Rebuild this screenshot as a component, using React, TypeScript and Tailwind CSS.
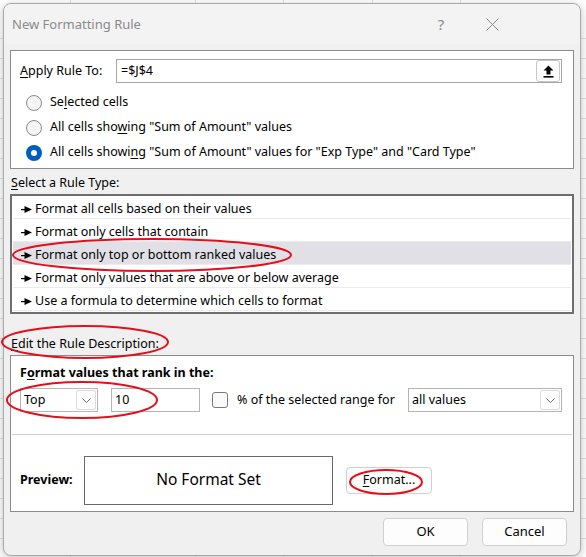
import type { ReactNode } from 'react';

const U = ({ children }: { children: ReactNode }) => (
  <span className="underline decoration-1 underline-offset-[2px]">{children}</span>
);

const Radio = ({ checked }: { checked?: boolean }) =>
  checked ? (
    <span className="w-[16px] h-[16px] rounded-full bg-[#005fb8] flex items-center justify-center shrink-0">
      <span className="w-[6px] h-[6px] rounded-full bg-white" />
    </span>
  ) : (
    <span className="w-[16px] h-[16px] rounded-full bg-[#f5f5f5] border border-[#8a8a8a] shrink-0" />
  );

const RowArrow = () => (
  <svg width="11" height="7" viewBox="0 0 11 7" className="shrink-0">
    <rect x="0" y="3" width="5" height="1.2" fill="#000" />
    <path d="M3.5 0 L11 3.5 L3.5 7 Z" fill="#000" />
  </svg>
);

const Chevron = () => (
  <svg width="9" height="5" viewBox="0 0 9 5">
    <path d="M0.5 0.5 L4.5 4.5 L8.5 0.5" fill="none" stroke="#666" strokeWidth="1" />
  </svg>
);

const Select = ({ value, width }: { value: string; width: string }) => (
  <div className={`${width} h-[24px] border border-[#b5b5b5] bg-white flex items-center pl-[3px] pr-[1px]`}>
    <span className="flex-1">{value}</span>
    <span className="w-[20px] h-[20px] border border-[#dadada] rounded-[2px] flex items-center justify-center">
      <Chevron />
    </span>
  </div>
);

const rules = [
  'Format all cells based on their values',
  'Format only cells that contain',
  'Format only top or bottom ranked values',
  'Format only values that are above or below average',
  'Use a formula to determine which cells to format',
];

export default function App() {
  return (
    <div className="relative w-[586px] h-[557px] overflow-hidden bg-white pl-[3px] pt-[3px] font-['Noto_Sans',sans-serif] text-[12.5px] text-black">
      {/* spreadsheet grid behind the dialog */}
      {[70, 195, 283, 372, 460].map((x) => (
        <div key={x} className="absolute top-0 w-px h-[557px] bg-[#e1e1e1]" style={{ left: x }} />
      ))}
      {[38, 58, 78, 98, 118, 138, 158, 178, 198, 218, 238, 258, 278, 298, 318, 338, 358, 378, 398, 418, 438, 458, 478, 498, 518, 538].map((y) => (
        <div key={y} className="absolute left-0 w-[586px] h-px bg-[#e1e1e1]" style={{ top: y }} />
      ))}

      <div className="relative w-[578px] h-[553px] bg-[#f0f0f0] border border-[#a9a9a9] rounded-[8px] shadow-[0_2px_10px_rgba(0,0,0,0.25)] flex flex-col">
        {/* title bar */}
        <div className="h-[40px] flex items-center pl-[8px] bg-[#f3f3f3] rounded-t-[8px] text-[#8a8a8a]">
          <span className="flex-1 text-[13px] pt-px">New Formatting Rule</span>
          <span className="w-[30px] text-center text-[15px]">?</span>
          <span className="w-[30px] ml-[21px] mr-[73px] flex justify-center">
            <svg width="13" height="13" viewBox="0 0 13 13">
              <path d="M0.5 0.5 L12.5 12.5 M12.5 0.5 L0.5 12.5" stroke="#8a8a8a" strokeWidth="1" />
            </svg>
          </span>
        </div>

        <div className="px-[6px] flex flex-col">
          {/* apply rule to */}
          <div className="mt-[6px] h-[119px] border border-[#8c8c8c] bg-white pl-[9px] pr-[11px] pt-[8px]">
            <div className="flex items-center h-[24px]">
              <span className="w-[96px]">
                <U>A</U>pply Rule To:
              </span>
              <div className="flex-1 h-[24px] border border-[#a5a5a5] flex items-center pl-[4px] pr-px">
                <span className="flex-1">=$J$4</span>
                <span className="w-[24px] h-[22px] border border-[#c8c8c8] rounded-[3px] bg-[#fdfdfd] flex items-center justify-center">
                  <svg width="11" height="13" viewBox="0 0 11 13">
                    <path d="M5.5 0.5 L10.5 5.5 L7.5 5.5 L7.5 9.5 L3.5 9.5 L3.5 5.5 L0.5 5.5 Z" fill="#000" />
                    <rect x="0.5" y="11" width="10" height="1.6" fill="#000" />
                  </svg>
                </span>
              </div>
            </div>
            <div className="mt-[7px] flex flex-col pl-[6px]">
              <div className="h-[25px] flex items-center gap-[8px]">
                <Radio />
                <span>
                  Se<U>l</U>ected cells
                </span>
              </div>
              <div className="h-[25px] flex items-center gap-[8px]">
                <Radio />
                <span>
                  All cells sho<U>w</U>ing "Sum of Amount" values
                </span>
              </div>
              <div className="h-[25px] flex items-center gap-[8px]">
                <Radio checked />
                <span>
                  All cells showi<U>n</U>g "Sum of Amount" values for "Exp Type" and "Card Type"
                </span>
              </div>
            </div>
          </div>

          {/* rule type */}
          <div className="h-[25px] pt-[3px] flex items-center pl-px">
            <span>
              <U>S</U>elect a Rule Type:
            </span>
          </div>
          <div className="h-[120px] border-2 border-[#6e6e6e] bg-white px-px">
            {rules.map((r, i) => (
              <div
                key={r}
                className={`h-[23px] border-b border-[#ebebeb] flex items-center pt-[5px] pl-[8px] gap-[2px] ${
                  i === 2 ? 'bg-[#e0e0e6]' : ''
                }`}
              >
                <RowArrow />
                <span className="ml-px">{r}</span>
              </div>
            ))}
          </div>

          {/* description */}
          <div className="h-[41px] flex items-end pb-[3px] pl-px">
            <span className="leading-[16px]">
              <U>E</U>dit the Rule Description:
            </span>
          </div>
          <div className="h-[157px] border border-[#8c8c8c] bg-white flex flex-col">
            <div className="h-[78px] pl-[9px] pr-[11px] pt-[9px]">
              <div className="font-bold leading-[16px]">
                F<U>o</U>rmat values that rank in the:
              </div>
              <div className="mt-[7px] flex items-center h-[24px]">
                <Select value="Top" width="w-[78px]" />
                <div className="ml-[13px] w-[89px] h-[24px] border border-[#b5b5b5] flex items-center pl-[3px]">10</div>
                <span className="ml-[12px] w-[16px] h-[16px] rounded-[3px] border border-[#7a7a7a] bg-[#fafafa]" />
                <span className="ml-[9px]">
                  % of the selected ran<U>g</U>e for
                </span>
                <div className="ml-auto">
                  <Select value="all values" width="w-[154px]" />
                </div>
              </div>
            </div>
            <div className="mx-px h-px bg-[#d0d0d0]" />
            <div className="flex-1 flex items-center pl-[9px] pt-[14px]">
              <span className="w-[64px] font-bold">Preview:</span>
              <div className="w-[249px] h-[49px] border border-[#6a6a6a] flex items-center justify-center text-[15.5px]">
                No Format Set
              </div>
              <button className="ml-[13px] w-[86px] h-[27px] border border-[#d0d0d0] rounded-[4px] bg-[#fdfdfd]">
                <U>F</U>ormat...
              </button>
            </div>
          </div>

          {/* buttons */}
          <div className="mt-[6px] flex justify-end gap-[14px] pr-[7px]">
            <button className="w-[85px] h-[28px] border border-[#d0d0d0] rounded-[4px] bg-[#fdfdfd] text-[13px]">OK</button>
            <button className="w-[85px] h-[28px] border border-[#d0d0d0] rounded-[4px] bg-[#fdfdfd] text-[13px]">Cancel</button>
          </div>
        </div>
      </div>

      {/* red annotation ellipses */}
      <svg className="absolute inset-0 pointer-events-none" width="586" height="557">
        <g fill="none" stroke="#e3101c" strokeWidth="2">
          <ellipse cx="152" cy="255" rx="139" ry="16" />
          <ellipse cx="85" cy="342" rx="83" ry="16" />
          <ellipse cx="82" cy="400" rx="75" ry="18" />
          <ellipse cx="386" cy="482" rx="36" ry="12" />
        </g>
      </svg>
    </div>
  );
}
